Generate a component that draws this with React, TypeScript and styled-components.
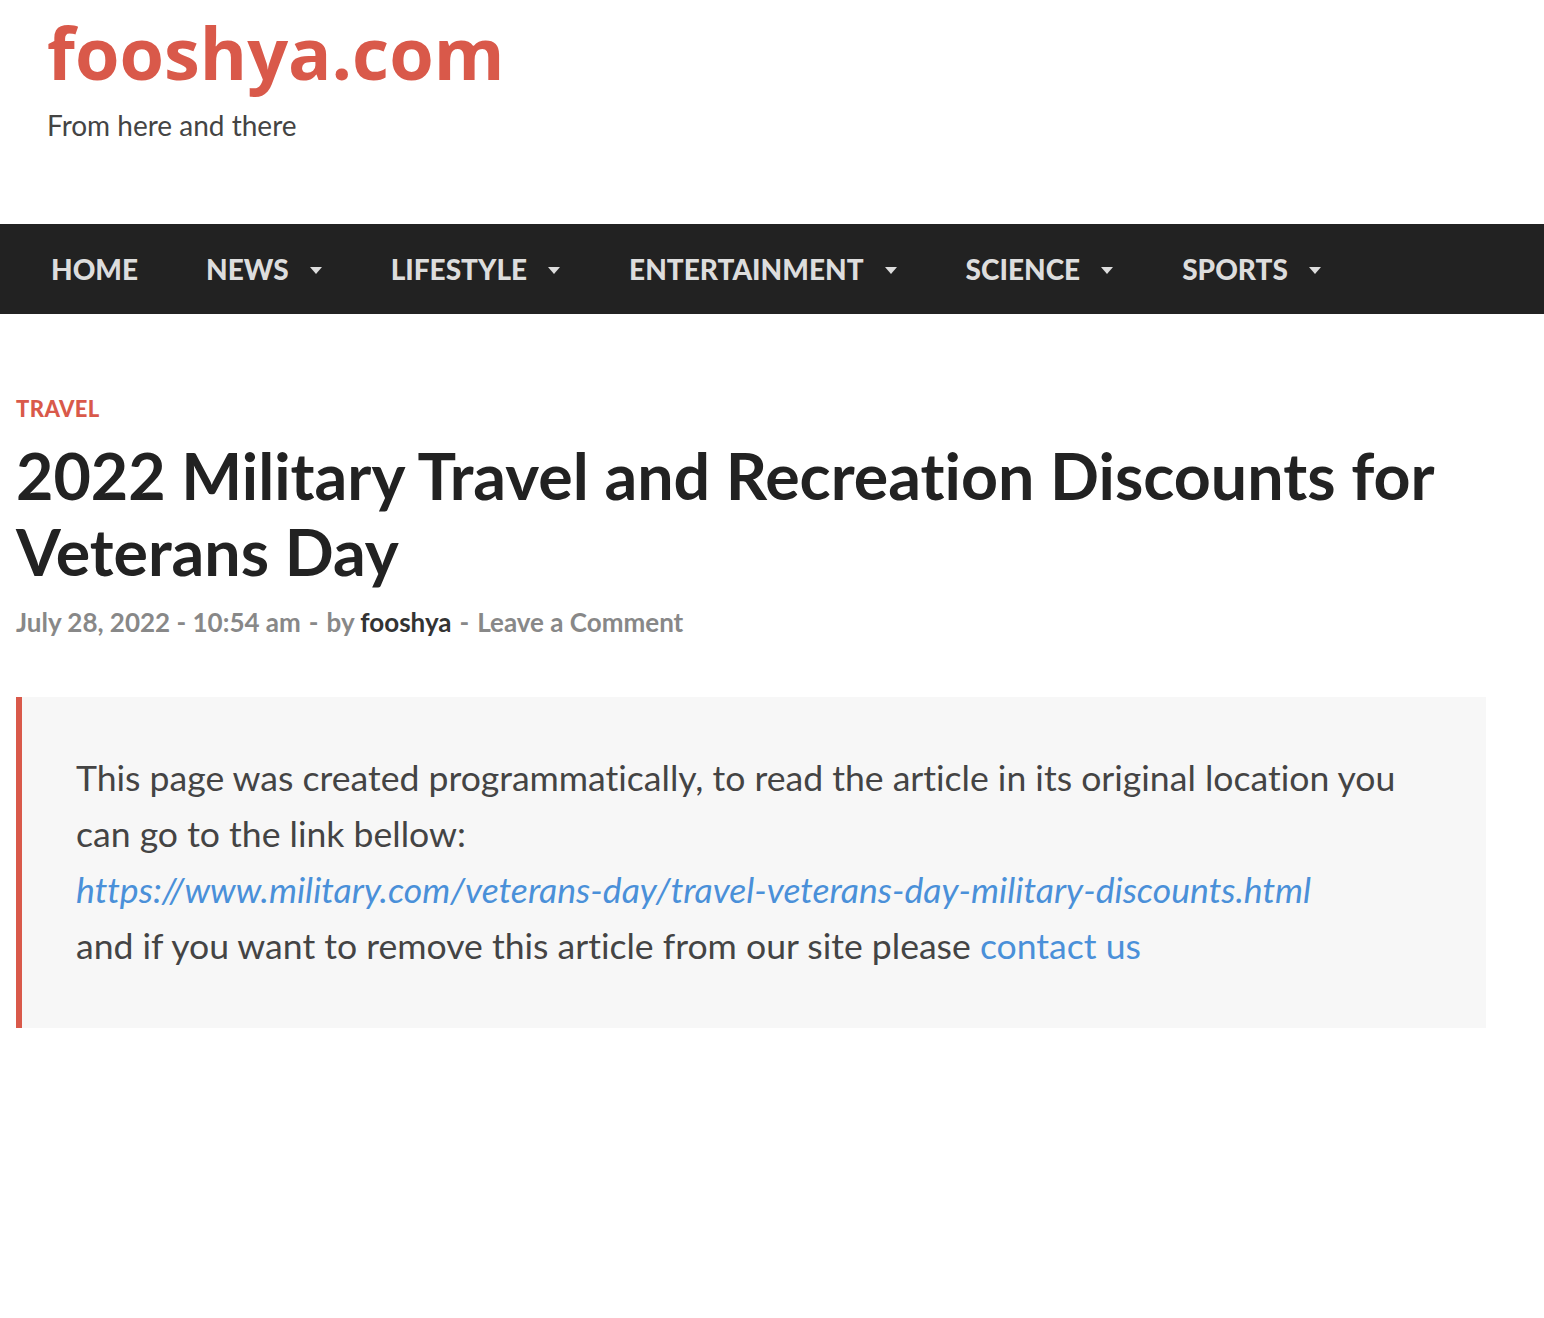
import React from "react";
import styled, { createGlobalStyle } from "styled-components";

const GlobalStyle = createGlobalStyle`
	body {
		margin: 0;
		background: #fff;
		font-family: Lato, "Open Sans", sans-serif;
		font-variant-ligatures: no-common-ligatures;
		color: #333;
	}
	* {
		box-sizing: border-box;
	}
`;

const navItems = [
	{ label: "HOME", drop: false },
	{ label: "NEWS", drop: true },
	{ label: "LIFESTYLE", drop: true },
	{ label: "ENTERTAINMENT", drop: true },
	{ label: "SCIENCE", drop: true },
	{ label: "SPORTS", drop: true },
];

const Caret = () => (
	<svg width="14" height="9" viewBox="0 0 14 9">
		<path d="M1 1 L13 1 L7 8 Z" fill="#ddd" />
	</svg>
);

const App = () => {
	return (
		<Page>
			<GlobalStyle />
			<Header>
				<Logo>fooshya.com</Logo>
				<Tagline>From here and there</Tagline>
			</Header>

			<Nav>
				{navItems.map((item) => (
					<NavItem key={item.label}>
						{item.label}
						{item.drop && <Caret />}
					</NavItem>
				))}
			</Nav>

			<Main>
				<Category>TRAVEL</Category>
				<Title>2022 Military Travel and Recreation Discounts for Veterans Day</Title>
				<Meta>
					July 28, 2022 - 10:54 am
					<Sep>-</Sep>
					by <Author>fooshya</Author>
					<Sep>-</Sep>
					Leave a Comment
				</Meta>

				<Notice>
					This page was created programmatically, to read the article in its original location you
					can go to the link bellow:
					<br />
					<UrlLink href="#">
						https://www.military.com/veterans-day/travel-veterans-day-military-discounts.html
					</UrlLink>
					<br />
					and if you want to remove this article from our site please <Contact href="#">contact us</Contact>
				</Notice>
			</Main>
		</Page>
	);
};

export default App;

const Page = styled.div`
	min-height: 1318px;
`;

const Header = styled.header`
	height: 224px;
	padding: 11px 47px 0;
`;

const Logo = styled.div`
	font-family: "Open Sans", sans-serif;
	font-weight: 700;
	font-size: 72px;
	line-height: 82px;
	color: #d9594a;
`;

const Tagline = styled.div`
	margin-top: 15px;
	font-size: 28px;
	line-height: 34px;
	color: #444;
`;

const Nav = styled.nav`
	height: 90px;
	background: #222;
	display: flex;
	align-items: center;
	padding-left: 17px;
`;

const NavItem = styled.div`
	display: flex;
	align-items: center;
	gap: 20px;
	padding: 0 34px;
	font-size: 28px;
	font-weight: 900;
	color: #ddd;

	svg {
		margin-top: 2px;
	}
`;

const Main = styled.main`
	width: 1486px;
	padding: 83px 0 0 16px;
`;

const Category = styled.div`
	font-size: 22px;
	font-weight: 900;
	line-height: 24px;
	letter-spacing: 0.4px;
	color: #d9594a;
`;

const Title = styled.h1`
	margin: 16px 0 0;
	font-size: 64.5px;
	font-weight: 700;
	line-height: 76px;
	color: #222;
`;

const Meta = styled.div`
	margin-top: 16px;
	font-size: 26px;
	font-weight: 700;
	line-height: 34px;
	color: #888;
`;

const Sep = styled.span`
	margin: 0 8px;
`;

const Author = styled.span`
	color: #333;
`;

const Notice = styled.div`
	margin-top: 58px;
	background: #f7f7f7;
	border-left: 6px solid #d9594a;
	padding: 53px 54px 54px;
	font-size: 35.6px;
	line-height: 56px;
	color: #444;
`;

const UrlLink = styled.a`
	color: #4a90d9;
	font-style: italic;
	text-decoration: none;
`;

const Contact = styled.a`
	color: #4a90d9;
	text-decoration: none;
`;
